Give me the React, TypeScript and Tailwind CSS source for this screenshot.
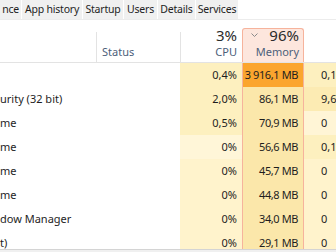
const tabs = [
  { label: 'nce', w: 'w-[21px] justify-end pr-[2px]' },
  { label: 'App history', w: 'w-[60px] justify-center' },
  { label: 'Startup', w: 'w-[40px] justify-center' },
  { label: 'Users', w: 'w-[33px] justify-center' },
  { label: 'Details', w: 'w-[37px] justify-center' },
  { label: 'Services', w: 'w-[42px] justify-center' },
];

type Row = {
  name: string;
  cpu: string;
  mem: string;
  next: string;
  cpuBg: string;
  memBg: string;
  nextBg: string;
};

const rows: Row[] = [
  { name: '', cpu: '0,4%', mem: '3 916,1 MB', next: '0,1', cpuBg: 'bg-[#fdf0bf]', memBg: 'bg-[#fba52e]', nextBg: 'bg-[#fdf0bf]' },
  { name: 'urity (32 bit)', cpu: '2,0%', mem: '86,1 MB', next: '9,6', cpuBg: 'bg-[#fdf0bf]', memBg: 'bg-[#fbe7aa]', nextBg: 'bg-[#fcebb3]' },
  { name: 'me', cpu: '0,5%', mem: '70,9 MB', next: '0', cpuBg: 'bg-[#fdf0bf]', memBg: 'bg-[#fbe7aa]', nextBg: 'bg-[#fff5d6]' },
  { name: 'me', cpu: '0%', mem: '56,6 MB', next: '0,1', cpuBg: 'bg-[#fff6d8]', memBg: 'bg-[#fbe7aa]', nextBg: 'bg-[#fdf0bf]' },
  { name: 'me', cpu: '0%', mem: '45,7 MB', next: '0', cpuBg: 'bg-[#fff3cc]', memBg: 'bg-[#fbe7aa]', nextBg: 'bg-[#fff3cc]' },
  { name: 'me', cpu: '0%', mem: '44,8 MB', next: '0', cpuBg: 'bg-[#fff3cc]', memBg: 'bg-[#fbe7aa]', nextBg: 'bg-[#fff3cc]' },
  { name: 'dow Manager', cpu: '0%', mem: '34,0 MB', next: '0', cpuBg: 'bg-[#fff3cc]', memBg: 'bg-[#fbe7aa]', nextBg: 'bg-[#fff3cc]' },
  { name: 't)', cpu: '0%', mem: '29,1 MB', next: '0', cpuBg: 'bg-[#fff3cc]', memBg: 'bg-[#fbe7aa]', nextBg: 'bg-[#fff3cc]' },
];

export default function App() {
  return (
    <div
      className="w-[336px] h-[252px] overflow-hidden bg-white flex flex-col text-[11px] text-[#1e1e1e]"
      style={{ fontFamily: '"Noto Sans", "Open Sans", sans-serif' }}
    >
      {/* tab strip */}
      <div className="h-[20px] flex gap-[1px] border-b border-[#ececec] shrink-0">
        {tabs.map((t) => (
          <div
            key={t.label}
            className={`h-[19px] flex items-center shrink-0 bg-[#f0f0f0] whitespace-nowrap overflow-hidden text-[10.5px] tracking-[-0.2px] ${t.w}`}
          >
            {t.label}
          </div>
        ))}
      </div>

      {/* column headers */}
      <div className="h-[43px] flex shrink-0 border-b border-[#e3e3e3] text-[#4c607a]">
        <div className="w-[96px] shrink-0" />
        <div className="w-[84px] shrink-0 border-l border-[#e3e3e3] mt-[12px] pl-[5px] flex items-end pb-[2px]">
          Status
        </div>
        <div className="w-[62px] shrink-0 border-l border-[#e3e3e3] mt-[12px] flex flex-col items-end justify-end pr-[5px] pb-[2px]">
          <span className="text-[15px] leading-[18px] text-[#2b2b2b]">3%</span>
          <span className="leading-[16px]">CPU</span>
        </div>
        <div className="w-[62px] shrink-0 mt-[8px] border border-b-0 border-[#f6b39c] rounded-t-[3px] bg-[#fde6dd] flex flex-col justify-end pr-[4px] pb-[2px] relative">
          <svg className="absolute left-[8px] top-[4px]" width="7" height="4" viewBox="0 0 7 4">
            <polyline points="0.5,0.5 3.5,3.5 6.5,0.5" fill="none" stroke="#8a8a8a" strokeWidth="1" />
          </svg>
          <span className="text-[15px] leading-[18px] text-[#2b2b2b] text-right">96%</span>
          <span className="leading-[16px] text-right">Memory</span>
        </div>
        <div className="flex-1" />
      </div>

      {/* rows */}
      <div className="flex-1 overflow-hidden">
        {rows.map((r, i) => (
          <div key={i} className="h-[24px] flex items-center">
            <div className="w-[96px] shrink-0 h-full flex items-center whitespace-nowrap overflow-hidden">
              {r.name}
            </div>
            <div className="w-[84px] shrink-0 h-full" />
            <div className={`w-[62px] shrink-0 h-full flex items-center justify-end pr-[5px] whitespace-nowrap ${r.cpuBg}`}>
              {r.cpu}
            </div>
            <div
              className={`w-[62px] shrink-0 h-full flex items-center justify-end pr-[5px] whitespace-nowrap tracking-[-0.4px] border-x border-[#f6b39c] ${r.memBg}`}
            >
              {r.mem}
            </div>
            <div className={`flex-1 h-full flex items-center pl-[17px] whitespace-nowrap ${r.nextBg}`}>
              {r.next}
            </div>
          </div>
        ))}
      </div>

      <div className="h-[3px] shrink-0 border-t border-[#d4d4d4] bg-[#f0f0f0]" />
    </div>
  );
}
